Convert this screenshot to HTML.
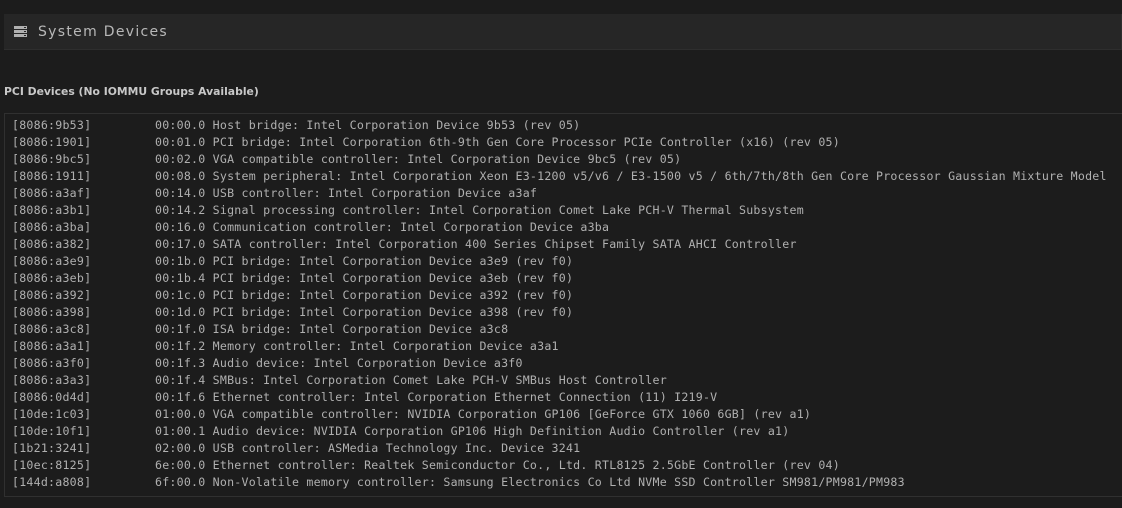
<!DOCTYPE html>
<html><head><style>
html,body{margin:0;padding:0;background:#1c1c1c;width:1122px;height:508px;overflow:hidden}
.hdr{position:absolute;left:4px;top:14px;width:1117px;height:35px;background:#262626;border-bottom:1px solid #2e2e2e;border-right:1px solid #2e2e2e}
.hdr .t{position:absolute;left:34px;top:10px;font:14px "DejaVu Sans","Liberation Sans",sans-serif;letter-spacing:1.3px;color:#b8b8b8}
.ico{position:absolute;left:10px;top:12px}
.h2{position:absolute;left:4px;top:85px;font:bold 10.8px "DejaVu Sans","Liberation Sans",sans-serif;color:#c8c8c8}
.box{position:absolute;left:4px;top:113px;width:1130px;height:382px;border:1px solid #303030;background:#1c1c1c}
.rows{position:absolute;left:7px;top:3px;font:11.6px "DejaVu Sans Mono","Liberation Mono",monospace;color:#b0b0b0;line-height:17px;letter-spacing:0.23px}
.rows div{white-space:pre;height:17px}
.rows div span{display:inline-block;width:143px}
</style></head><body>
<div class="hdr">
<svg class="ico" width="13" height="11" viewBox="0 0 13 11"><g fill="#b0b0b0"><rect x="0" y="0" width="13" height="3"/><rect x="0" y="4" width="13" height="3"/><rect x="0" y="8" width="13" height="3"/></g><g fill="#262626"><rect x="10" y="1" width="2" height="1"/><rect x="10" y="5" width="2" height="1"/><rect x="10" y="9" width="2" height="1"/></g></svg>
<div class="t">System Devices</div></div>
<div class="h2">PCI Devices (No IOMMU Groups Available)</div>
<div class="box"><div class="rows"><div><span>[8086:9b53]</span>00:00.0 Host bridge: Intel Corporation Device 9b53 (rev 05)</div><div><span>[8086:1901]</span>00:01.0 PCI bridge: Intel Corporation 6th-9th Gen Core Processor PCIe Controller (x16) (rev 05)</div><div><span>[8086:9bc5]</span>00:02.0 VGA compatible controller: Intel Corporation Device 9bc5 (rev 05)</div><div><span>[8086:1911]</span>00:08.0 System peripheral: Intel Corporation Xeon E3-1200 v5/v6 / E3-1500 v5 / 6th/7th/8th Gen Core Processor Gaussian Mixture Model</div><div><span>[8086:a3af]</span>00:14.0 USB controller: Intel Corporation Device a3af</div><div><span>[8086:a3b1]</span>00:14.2 Signal processing controller: Intel Corporation Comet Lake PCH-V Thermal Subsystem</div><div><span>[8086:a3ba]</span>00:16.0 Communication controller: Intel Corporation Device a3ba</div><div><span>[8086:a382]</span>00:17.0 SATA controller: Intel Corporation 400 Series Chipset Family SATA AHCI Controller</div><div><span>[8086:a3e9]</span>00:1b.0 PCI bridge: Intel Corporation Device a3e9 (rev f0)</div><div><span>[8086:a3eb]</span>00:1b.4 PCI bridge: Intel Corporation Device a3eb (rev f0)</div><div><span>[8086:a392]</span>00:1c.0 PCI bridge: Intel Corporation Device a392 (rev f0)</div><div><span>[8086:a398]</span>00:1d.0 PCI bridge: Intel Corporation Device a398 (rev f0)</div><div><span>[8086:a3c8]</span>00:1f.0 ISA bridge: Intel Corporation Device a3c8</div><div><span>[8086:a3a1]</span>00:1f.2 Memory controller: Intel Corporation Device a3a1</div><div><span>[8086:a3f0]</span>00:1f.3 Audio device: Intel Corporation Device a3f0</div><div><span>[8086:a3a3]</span>00:1f.4 SMBus: Intel Corporation Comet Lake PCH-V SMBus Host Controller</div><div><span>[8086:0d4d]</span>00:1f.6 Ethernet controller: Intel Corporation Ethernet Connection (11) I219-V</div><div><span>[10de:1c03]</span>01:00.0 VGA compatible controller: NVIDIA Corporation GP106 [GeForce GTX 1060 6GB] (rev a1)</div><div><span>[10de:10f1]</span>01:00.1 Audio device: NVIDIA Corporation GP106 High Definition Audio Controller (rev a1)</div><div><span>[1b21:3241]</span>02:00.0 USB controller: ASMedia Technology Inc. Device 3241</div><div><span>[10ec:8125]</span>6e:00.0 Ethernet controller: Realtek Semiconductor Co., Ltd. RTL8125 2.5GbE Controller (rev 04)</div><div><span>[144d:a808]</span>6f:00.0 Non-Volatile memory controller: Samsung Electronics Co Ltd NVMe SSD Controller SM981/PM981/PM983</div></div></div>
</body></html>
